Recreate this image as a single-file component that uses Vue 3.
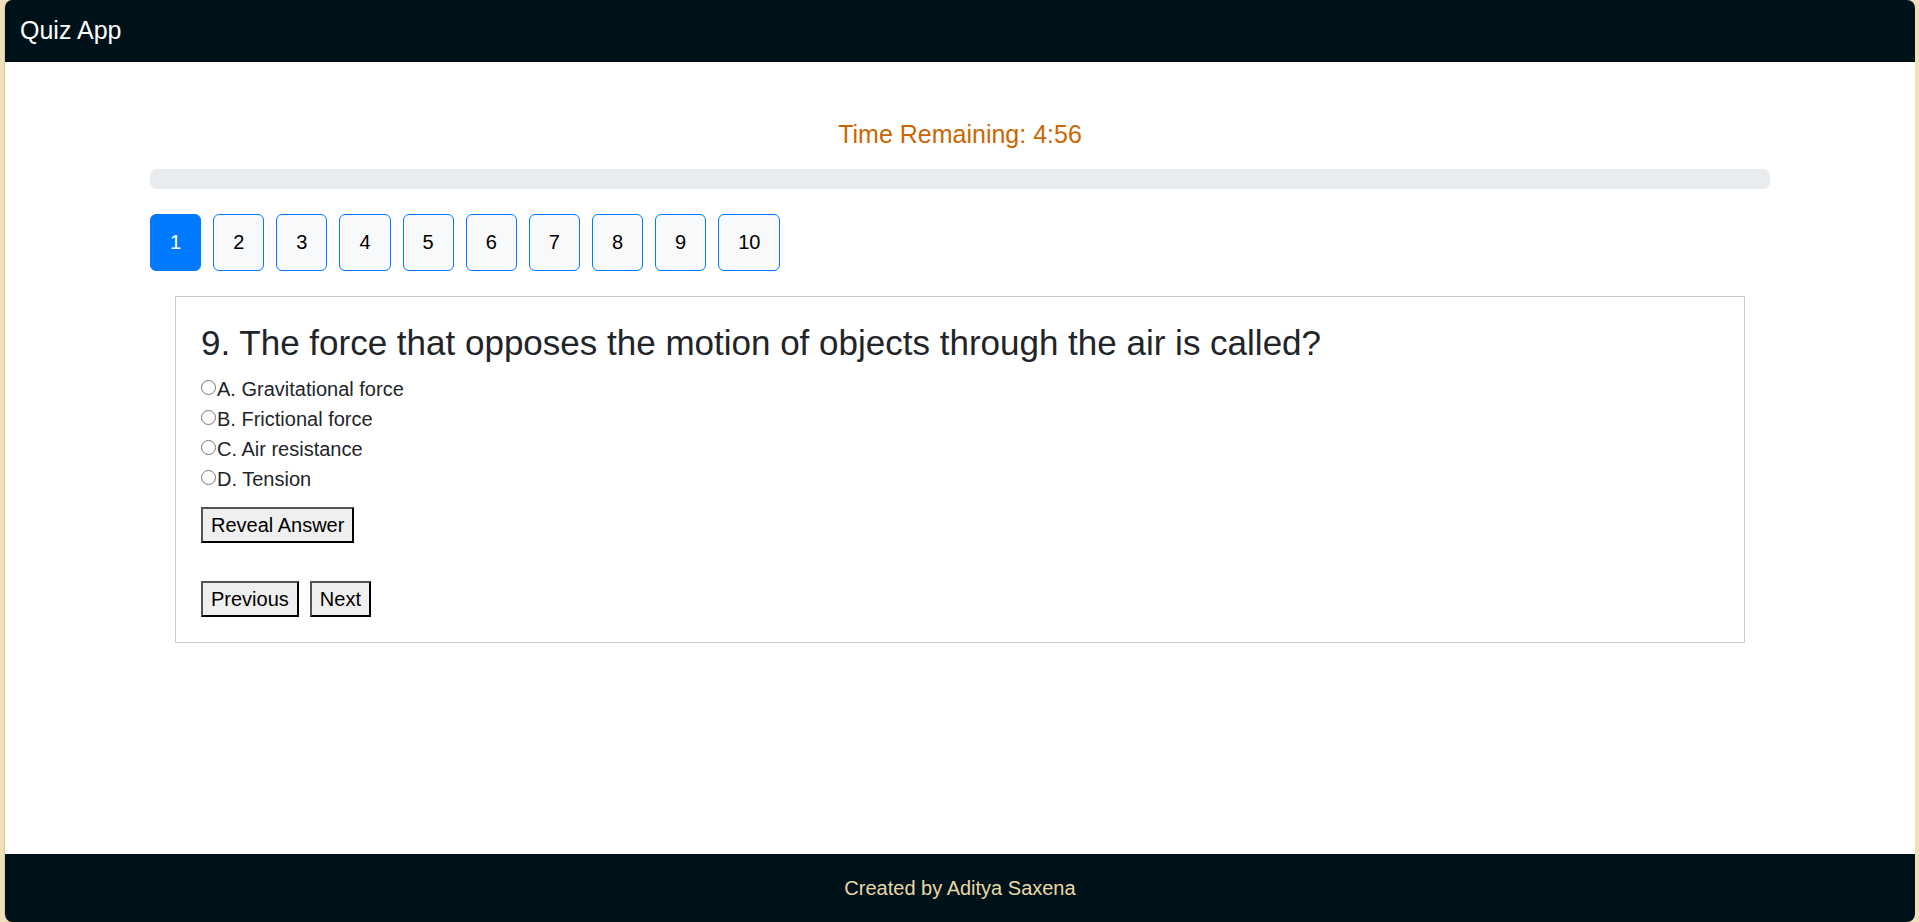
<script setup>
import { ref } from 'vue'

const pages = [1, 2, 3, 4, 5, 6, 7, 8, 9, 10]
const current = ref(1)
const selected = ref('')
const options = [
  { key: 'A', text: 'Gravitational force' },
  { key: 'B', text: 'Frictional force' },
  { key: 'C', text: 'Air resistance' },
  { key: 'D', text: 'Tension' },
]
</script>

<template>
  <div class="card">
    <header class="card-header">Quiz App</header>
    <main class="card-body">
      <p class="timer">Time Remaining: 4:56</p>
      <div class="progress" role="progressbar" aria-label="Quiz progress" aria-valuenow="0"></div>
      <nav class="pages" aria-label="Questions">
        <button
          v-for="n in pages"
          :key="n"
          type="button"
          class="page"
          :class="{ active: n === current }"
          @click="current = n"
        >{{ n }}</button>
      </nav>
      <section class="question">
        <h1 class="title">9. The force that opposes the motion of objects through the air is called?</h1>
        <div class="options">
          <label v-for="o in options" :key="o.key" class="option">
            <input v-model="selected" class="radio" type="radio" name="answer" :value="o.key" />
            <span>{{ o.key }}. {{ o.text }}</span>
          </label>
        </div>
        <button type="button" class="action">Reveal Answer</button>
        <div class="steps">
          <button type="button" class="action">Previous</button>
          <button type="button" class="action">Next</button>
        </div>
      </section>
    </main>
    <footer class="card-footer">Created by Aditya Saxena</footer>
  </div>
</template>

<style>
body {
  margin: 0;
  background: #f0dfb9;
}
</style>

<style scoped>
.card {
  box-sizing: border-box;
  min-height: 100vh;
  margin: 0 4px;
  display: flex;
  flex-direction: column;
  overflow: hidden;
  border: 0 solid #d9cba8;
  border-width: 0 0 0 1px;
  border-radius: 8px;
  background: #fff;
  color: #212529;
  font-family: "Liberation Sans", Arial, sans-serif;
  font-size: 20px;
  line-height: 30px;
}
.card-header {
  padding: 12px 15px;
  border-bottom: 1px solid #000a12;
  background: #001219;
  color: #fff;
  font-size: 25px;
  line-height: 37px;
}
.card-body {
  flex: 1;
  padding: 53px 145px 25px;
}
.timer {
  margin: 0 0 16px;
  color: #ca6702;
  font-size: 25px;
  line-height: 38px;
  text-align: center;
}
.progress {
  height: 20px;
  border-radius: 7px;
  background: #e9ecef;
}
.pages {
  display: flex;
  flex-wrap: wrap;
  gap: 12px;
  margin: 25px 0;
}
.page {
  padding: 12px 19px 13px;
  border: 1px solid #007bff;
  border-radius: 6px;
  background: #f8f9fa;
  color: #000;
  font: inherit;
  cursor: pointer;
}
.page.active {
  background: #007bff;
  color: #fff;
}
.question {
  margin: 0 25px;
  padding: 25px;
  border: 1px solid #ccc;
}
.title {
  margin: 0 0 10px;
  font-size: 35px;
  font-weight: 400;
  line-height: 42px;
}
.options {
  margin-bottom: 13px;
}
.option {
  display: flex;
  align-items: flex-start;
}
.radio {
  width: 15px;
  height: 15px;
  margin: 6px 1px 0 0;
}
.action {
  padding: 1px 8px;
  border: 2px outset #000;
  border-radius: 0;
  background: #efefef;
  color: #000;
  font: inherit;
}
.steps {
  display: flex;
  gap: 11px;
  margin-top: 38px;
}
.card-footer {
  padding: 19px;
  background: #001219;
  color: #e9d8a6;
  text-align: center;
}
</style>
